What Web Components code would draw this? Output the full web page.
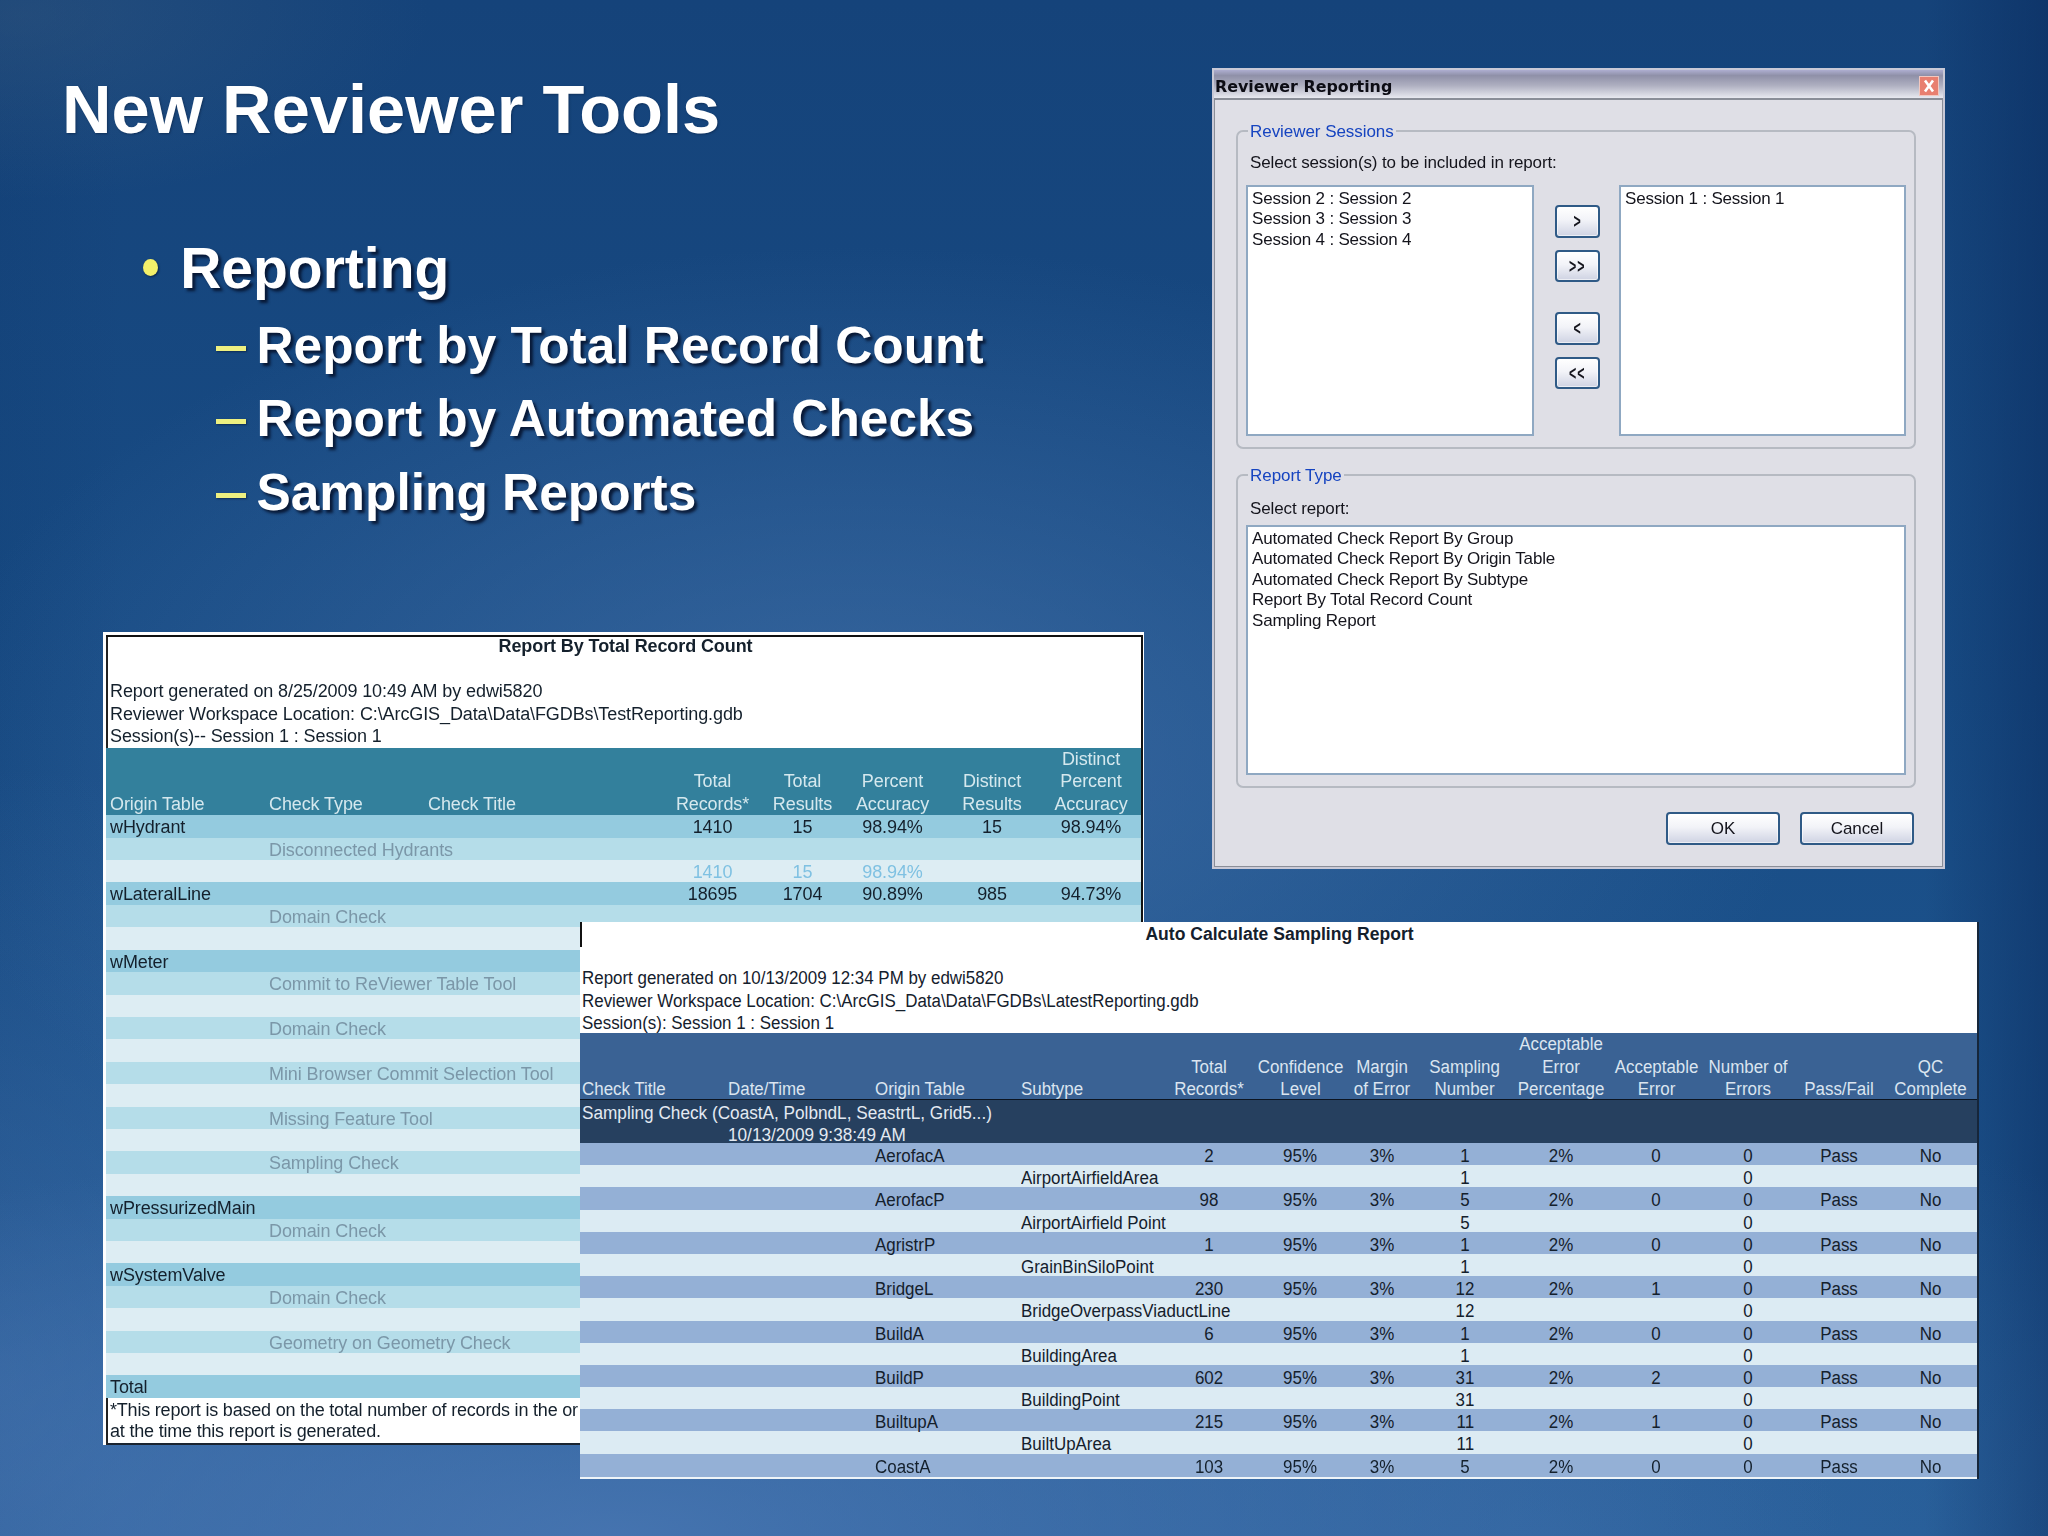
<!DOCTYPE html>
<html lang="en">
<head>
<meta charset="utf-8">
<title>New Reviewer Tools</title>
<style>
html,body{margin:0;padding:0;background:#1a4a80}
</style>
</head>
<body>
<rv-slide>
  <rv-title>New Reviewer Tools</rv-title>
  <rv-bullet>Reporting</rv-bullet>
  <rv-sub>Report by Total Record Count</rv-sub>
  <rv-sub>Report by Automated Checks</rv-sub>
  <rv-sub>Sampling Reports</rv-sub>

  <rv-report slot="canvas" id="r1" theme="teal"
    cols="159px 159px 239px 97px 83px 97px 102px 96px 1fr" left="3" lh="22.42">
    <span slot="title">Report By Total Record Count</span>
    <div slot="info">Report generated on 8/25/2009 10:49 AM by edwi5820</div>
    <div slot="info">Reviewer Workspace Location: C:\ArcGIS_Data\Data\FGDBs\TestReporting.gdb</div>
    <div slot="info">Session(s)-- Session 1 : Session 1</div>
    <rv-row kind="h" cells="Origin Table|Check Type|Check Title|Total<br>Records*|Total<br>Results|Percent<br>Accuracy|Distinct<br>Results|Distinct<br>Percent<br>Accuracy"></rv-row>
    <rv-row kind="o" cells="wHydrant|||1410|15|98.94%|15|98.94%"></rv-row>
    <rv-row kind="t" cells="|Disconnected Hydrants"></rv-row>
    <rv-row kind="v" cells="|||1410|15|98.94%"></rv-row>
    <rv-row kind="o" cells="wLateralLine|||18695|1704|90.89%|985|94.73%"></rv-row>
    <rv-row kind="t" cells="|Domain Check"></rv-row>
    <rv-row kind="v" cells=""></rv-row>
    <rv-row kind="o" cells="wMeter"></rv-row>
    <rv-row kind="t" cells="|Commit to ReViewer Table Tool"></rv-row>
    <rv-row kind="v" cells=""></rv-row>
    <rv-row kind="t" cells="|Domain Check"></rv-row>
    <rv-row kind="v" cells=""></rv-row>
    <rv-row kind="t" cells="|Mini Browser Commit Selection Tool"></rv-row>
    <rv-row kind="v" cells=""></rv-row>
    <rv-row kind="t" cells="|Missing Feature Tool"></rv-row>
    <rv-row kind="v" cells=""></rv-row>
    <rv-row kind="t" cells="|Sampling Check"></rv-row>
    <rv-row kind="v" cells=""></rv-row>
    <rv-row kind="o" cells="wPressurizedMain"></rv-row>
    <rv-row kind="t" cells="|Domain Check"></rv-row>
    <rv-row kind="v" cells=""></rv-row>
    <rv-row kind="o" cells="wSystemValve"></rv-row>
    <rv-row kind="t" cells="|Domain Check"></rv-row>
    <rv-row kind="v" cells=""></rv-row>
    <rv-row kind="t" cells="|Geometry on Geometry Check"></rv-row>
    <rv-row kind="v" cells=""></rv-row>
    <rv-row kind="o" cells="Total"></rv-row>
    <div slot="note">*This report is based on the total number of records in the or</div>
    <div slot="note">at the time this report is generated.</div>
  </rv-report>

  <rv-report slot="canvas" id="r2" theme="blue"
    cols="146px 147px 146px 145px 91px 91px 72px 94px 98px 93px 90px 92px 92px" left="4" lh="22.2">
    <span slot="title">Auto Calculate Sampling Report</span>
    <div slot="info">Report generated on 10/13/2009 12:34 PM by edwi5820</div>
    <div slot="info">Reviewer Workspace Location: C:\ArcGIS_Data\Data\FGDBs\LatestReporting.gdb</div>
    <div slot="info">Session(s): Session 1 : Session 1</div>
    <rv-row kind="h" cells="Check Title|Date/Time|Origin Table|Subtype|Total<br>Records*|Confidence<br>Level|Margin<br>of Error|Sampling<br>Number|Acceptable<br>Error<br>Percentage|Acceptable<br>Error|Number of<br>Errors|Pass/Fail|QC<br>Complete"></rv-row>
    <rv-row kind="g" cells="Sampling Check (CoastA, PolbndL, SeastrtL, Grid5...)"></rv-row>
    <rv-row kind="g" cells="|10/13/2009 9:38:49 AM"></rv-row>
    <rv-row kind="o" cells="||AerofacA||2|95%|3%|1|2%|0|0|Pass|No"></rv-row>
    <rv-row kind="v" cells="|||AirportAirfieldArea||||1|||0"></rv-row>
    <rv-row kind="o" cells="||AerofacP||98|95%|3%|5|2%|0|0|Pass|No"></rv-row>
    <rv-row kind="v" cells="|||AirportAirfield Point||||5|||0"></rv-row>
    <rv-row kind="o" cells="||AgristrP||1|95%|3%|1|2%|0|0|Pass|No"></rv-row>
    <rv-row kind="v" cells="|||GrainBinSiloPoint||||1|||0"></rv-row>
    <rv-row kind="o" cells="||BridgeL||230|95%|3%|12|2%|1|0|Pass|No"></rv-row>
    <rv-row kind="v" cells="|||BridgeOverpassViaductLine||||12|||0"></rv-row>
    <rv-row kind="o" cells="||BuildA||6|95%|3%|1|2%|0|0|Pass|No"></rv-row>
    <rv-row kind="v" cells="|||BuildingArea||||1|||0"></rv-row>
    <rv-row kind="o" cells="||BuildP||602|95%|3%|31|2%|2|0|Pass|No"></rv-row>
    <rv-row kind="v" cells="|||BuildingPoint||||31|||0"></rv-row>
    <rv-row kind="o" cells="||BuiltupA||215|95%|3%|11|2%|1|0|Pass|No"></rv-row>
    <rv-row kind="v" cells="|||BuiltUpArea||||11|||0"></rv-row>
    <rv-row kind="o" cells="||CoastA||103|95%|3%|5|2%|0|0|Pass|No"></rv-row>
  </rv-report>

  <rv-dialog slot="canvas" heading="Reviewer Reporting">
    <rv-group legend="Reviewer Sessions" class="g1">
      <rv-label>Select session(s) to be included in report:</rv-label>
      <rv-picker>
        <rv-list slot="from"><div>Session 2 : Session 2</div><div>Session 3 : Session 3</div><div>Session 4 : Session 4</div></rv-list>
        <rv-btn slot="add" small>&gt;</rv-btn>
        <rv-btn slot="add" small>&gt;&gt;</rv-btn>
        <rv-btn slot="remove" small>&lt;</rv-btn>
        <rv-btn slot="remove" small>&lt;&lt;</rv-btn>
        <rv-list slot="to"><div>Session 1 : Session 1</div></rv-list>
      </rv-picker>
    </rv-group>
    <rv-group legend="Report Type" class="g2">
      <rv-label>Select report:</rv-label>
      <rv-list tall>
        <div>Automated Check Report By Group</div>
        <div>Automated Check Report By Origin Table</div>
        <div>Automated Check Report By Subtype</div>
        <div>Report By Total Record Count</div>
        <div>Sampling Report</div>
      </rv-list>
    </rv-group>
    <rv-btn slot="actions">OK</rv-btn>
    <rv-btn slot="actions">Cancel</rv-btn>
  </rv-dialog>
</rv-slide>

<script>
const SANS='"Liberation Sans",Arial,sans-serif';
function def(name,css,html,extra){
  customElements.define(name,class extends HTMLElement{
    constructor(){super();this.attachShadow({mode:'open'}).innerHTML='<style>'+css+'</style>'+html;}
    connectedCallback(){extra&&extra.call(this);}
  });
}
def('rv-slide',`
  :host{display:block;position:relative;width:2048px;height:1536px;overflow:hidden;font-family:${SANS};
    background:
      radial-gradient(ellipse 20% 12% at 1% 1%, rgba(70,100,130,.3), transparent 100%),
      radial-gradient(ellipse 46% 34% at 42% 50%, rgba(78,122,178,.6), transparent 100%),
      radial-gradient(ellipse 60% 26% at 30% 100%, rgba(78,122,182,.8), transparent 100%),
      radial-gradient(ellipse 30% 40% at 0% 90%, rgba(70,115,175,.5), transparent 100%),
      radial-gradient(ellipse 40% 30% at 75% 100%, rgba(60,110,170,.5), transparent 100%),
      linear-gradient(90deg, rgba(8,45,95,.12) 0, transparent 6%, transparent 94%, rgba(8,40,90,.5) 100%),
      linear-gradient(180deg,#15437a 0,#184c85 45%,#225a94 100%);}
  main{display:block;padding-top:70px}
`,`<main><slot></slot></main><slot name="canvas"></slot>`);
def('rv-title',`
  :host{display:block;padding-left:62px;margin-bottom:80.6px;font:700 68.6px/80px ${SANS};color:#fff;
    text-shadow:1px 1px 2px rgba(10,30,60,.5)}
`,`<slot></slot>`);
def('rv-bullet',`
  :host{display:flex;align-items:center;padding-left:143px;margin-bottom:4px;font:700 57px/74px ${SANS};color:#fff;
    text-shadow:3px 3px 3px rgba(5,15,40,.85)}
  i{flex:none;width:15px;height:17px;margin-right:22.2px;border-radius:50%;background:#f3f06a;box-shadow:1px 1px 2px rgba(5,15,40,.6)}
`,`<i></i><span><slot></slot></span>`);
def('rv-sub',`
  :host{display:flex;align-items:center;padding-left:215.5px;font:700 51.4px/73.5px ${SANS};color:#fff;
    text-shadow:3px 3px 3px rgba(5,15,40,.85)}
  i{flex:none;width:30px;height:5px;margin:6px 11px 0 0;background:#eef080;box-shadow:1px 1px 2px rgba(5,15,40,.5)}
`,`<i></i><span><slot></slot></span>`);

/* ---------- report window ---------- */
def('rv-report',`
  :host{position:absolute;display:block;box-sizing:border-box;font:18px/22.5px ${SANS};color:#14202c;filter:blur(.45px)}
  :host([theme=teal]){left:103px;top:632px;width:1041px;height:813px;border:solid #fff;border-width:3px 1px 0 3px;letter-spacing:-.1px;
    --h:#33809c;--hc:#d5e8ee;--o:#94cbdf;--t:#b5dde9;--v:#ddedf3;--tc:#7b97a8;--vc:#7fc1e2}
  :host([theme=blue]){left:580px;top:922px;width:1399px;height:557px;z-index:2;--sx:.94;--tsx:.975;
    --h:#3a6294;--hc:#dbe5f0;--o:#94b0d6;--v:#dcebf3;--g:#26405f}
  .wrap{display:flex;flex-direction:column;height:100%;box-sizing:border-box}
  :host([theme=teal]) .wrap{border-right:2px solid #111}
  :host([theme=blue]) .wrap{width:1399px;border-right:2px solid #16263a}
  .head{background:#fff;flex:none;overflow:hidden}
  :host([theme=teal]) .head{height:113px;box-shadow:inset 0 2px 0 #111,inset 2px 0 0 #222;padding-left:4px}
  :host([theme=blue]) .head{height:111px;padding:1px 0 0 2px;box-sizing:border-box;line-height:22.2px}
  .t{display:block;text-align:center;font-weight:700}
  ::slotted([slot=title]){display:inline-block;transform:scaleX(var(--tsx,1))}
  ::slotted([slot=info]){transform:scaleX(var(--sx,1));transform-origin:0 50%;white-space:nowrap}
  .gap{height:22.5px}
  :host([theme=blue]) .gap{height:22.2px}
  .rows{flex:none}
  :host([theme=blue]) .rows{flex:1;background:var(--o)}
  :host([theme=teal]) ::slotted([slot=note]){letter-spacing:-.2px}
  .note{background:#fff;height:47px;flex:none;box-sizing:border-box;padding:2px 0 0 4px;line-height:21px;white-space:nowrap;
    box-shadow:inset 2px 0 0 #222,inset 0 -2px 0 #1a2430;overflow:hidden}
  :host([theme=blue]) .note{display:none}
  :host([theme=blue]) .bottom{height:2px;background:#eef4f8;flex:none}
  .stub{display:none}
  :host([theme=blue]) .stub{display:block;position:absolute;left:0;top:0;width:2px;height:25px;background:#111}
`,`<span class="stub"></span><div class="wrap">
   <div class="head"><span class="t"><slot name="title"></slot></span><div class="gap"></div><slot name="info"></slot></div>
   <div class="rows"><slot></slot></div>
   <div class="note"><slot name="note"></slot></div>
   <div class="bottom"></div>
 </div>`);
def('rv-row',`
  :host{display:block;--lh:22.4px;--dy:3px}
  .r{display:grid;line-height:calc(var(--lh) + var(--dy));height:var(--lh);white-space:nowrap}
  .c{padding-left:3px;min-width:0}
  .c span{display:inline-block;transform:scaleX(var(--sx,1));transform-origin:0 50%}
  .n{text-align:center;padding-left:0}
  .n span{transform-origin:50% 50%}
  :host([kind=h]) .r{height:auto;line-height:var(--lh);align-items:end;background:var(--h);color:var(--hc)}
  :host([kind=o]) .r{background:var(--o)}
  :host([kind=t]) .r{background:var(--t);color:var(--tc)}
  :host([kind=v]) .r{background:var(--v);color:var(--vc,inherit)}
  :host([kind=g]) .r{background:var(--g);color:#e3eaf2;height:21.5px;line-height:26px;--sx:.955}
  :host(.teal) .r{padding-left:1px}
  :host(.blue) .r{--dy:4.5px}
  :host(.blue[kind=h]) .r{height:66px;margin-bottom:1px;box-shadow:0 1px 0 #0c1420}
  :host(.blue[kind=h]) .c{margin-bottom:-1px}
  :host(.blue) .c{padding-left:2px}
  :host(.blue) .n{padding-left:0}
`,`<div class="r"></div>`,function(){
  const rep=this.closest('rv-report');
  const left=+rep.getAttribute('left');
  this.classList.add(rep.getAttribute('theme')==='teal'?'teal':'blue');
  this.style.setProperty('--lh',rep.getAttribute('lh')+'px');
  const r=this.shadowRoot.querySelector('.r');
  r.style.gridTemplateColumns=rep.getAttribute('cols');
  if(r.children.length)return;
  (this.getAttribute('cells')||'').split('|').forEach((txt,i)=>{
    const d=document.createElement('div');
    d.className=i<left?'c':'c n';
    const s=document.createElement('span');
    txt.split('<br>').forEach((p,j)=>{if(j)s.appendChild(document.createElement('br'));s.appendChild(document.createTextNode(p));});
    d.appendChild(s);
    r.appendChild(d);
  });
});

/* ---------- dialog ---------- */
def('rv-dialog',`
  :host{position:absolute;left:1212px;top:68px;width:733px;height:801px;z-index:3;display:flex;flex-direction:column;
    box-sizing:border-box;border:2px solid #c9c9d6;background:#dfdfe6;font:17px/20px ${SANS};color:#14141c;filter:blur(.4px)}
  header{flex:none;height:30px;display:flex;align-items:center;justify-content:space-between;padding:5px 4px 0 1px;box-sizing:border-box;
    background:linear-gradient(180deg,#aeaed0 0,#8f90a8 20%,#aeafc0 55%,#e8e9f0 100%);border-bottom:2px solid #8a8e98;
    font:700 15.9px/20px "DejaVu Sans",Verdana,sans-serif;color:#0c0c14}
  .x{width:20px;height:20px;margin-top:-1px;box-sizing:border-box;border:1px solid #f2c8c0;background:#e87f70;display:flex;align-items:center;justify-content:center}
  .body{flex:1;padding:30px 26px 0 21px;display:flex;flex-direction:column;border:solid #8a8e98;border-width:0 1px 1px 1px}
  .actions{display:flex;justify-content:flex-end;gap:20px;padding-right:2px;margin-top:24px}
`,`<header><span id="h"></span>
   <span class="x"><svg width="12" height="14" viewBox="0 0 12 14"><path d="M2 1.5L10 12.5M10 1.5L2 12.5" stroke="#fff" stroke-width="2.6" fill="none"/></svg></span>
  </header>
  <div class="body"><slot></slot><div class="actions"><slot name="actions"></slot></div></div>`,function(){
  this.shadowRoot.getElementById('h').textContent=this.getAttribute('heading');
});
def('rv-group',`
  :host{display:block;position:relative;box-sizing:border-box;border:2px solid #b6bac2;border-radius:7px;padding:21px 8px 10px 8px}
  :host(.g1){height:319px;margin-bottom:25px}
  :host(.g2){height:314px;padding-top:23px}
  .lg{position:absolute;left:10px;top:-10px;padding:0 2px;background:#dfdfe6;color:#1644c0;letter-spacing:-.05px}
`,`<span class="lg" id="l"></span><slot></slot>`,function(){
  this.shadowRoot.getElementById('l').textContent=this.getAttribute('legend');
});
def('rv-label',`
  :host{display:block;line-height:20px;margin-left:4px;margin-bottom:12px;letter-spacing:-.12px;color:#14141c}
  :host-context(.g2){margin-bottom:6px}
`,`<slot></slot>`);
def('rv-picker',`
  :host{display:grid;grid-template-columns:288px 85px 287px;height:251px}
  .mid{display:flex;flex-direction:column;align-items:center;padding:20px 0 0 2px;gap:30px}
  .st{display:flex;flex-direction:column;gap:12px}
`,`<slot name="from"></slot>
   <div class="mid"><div class="st"><slot name="add"></slot></div><div class="st"><slot name="remove"></slot></div></div>
   <slot name="to"></slot>`);
def('rv-list',`
  :host{display:block;box-sizing:border-box;background:#fff;border:2px solid #8fa8c2;padding:1.5px 4px;line-height:20.6px;letter-spacing:-.2px;overflow:hidden;height:251px}
  :host([tall]){height:250px}
`,`<slot></slot>`);
def('rv-btn',`
  :host{display:flex;align-items:center;justify-content:center;box-sizing:border-box;width:114px;height:33px;border:2px solid #2f5a86;border-radius:4px;
    background:linear-gradient(180deg,#fff 0,#f2f3f8 45%,#cfd3e3 100%);box-shadow:inset 0 0 0 1px rgba(255,255,255,.6);line-height:20px;letter-spacing:-.1px}
  :host([small]){width:45px;height:32.5px;font:700 20px/20px ${SANS};letter-spacing:1.5px}
  :host([small]) span{display:inline-block;transform:scaleX(.62)}
`,`<span><slot></slot></span>`);
</script>
</body>
</html>
